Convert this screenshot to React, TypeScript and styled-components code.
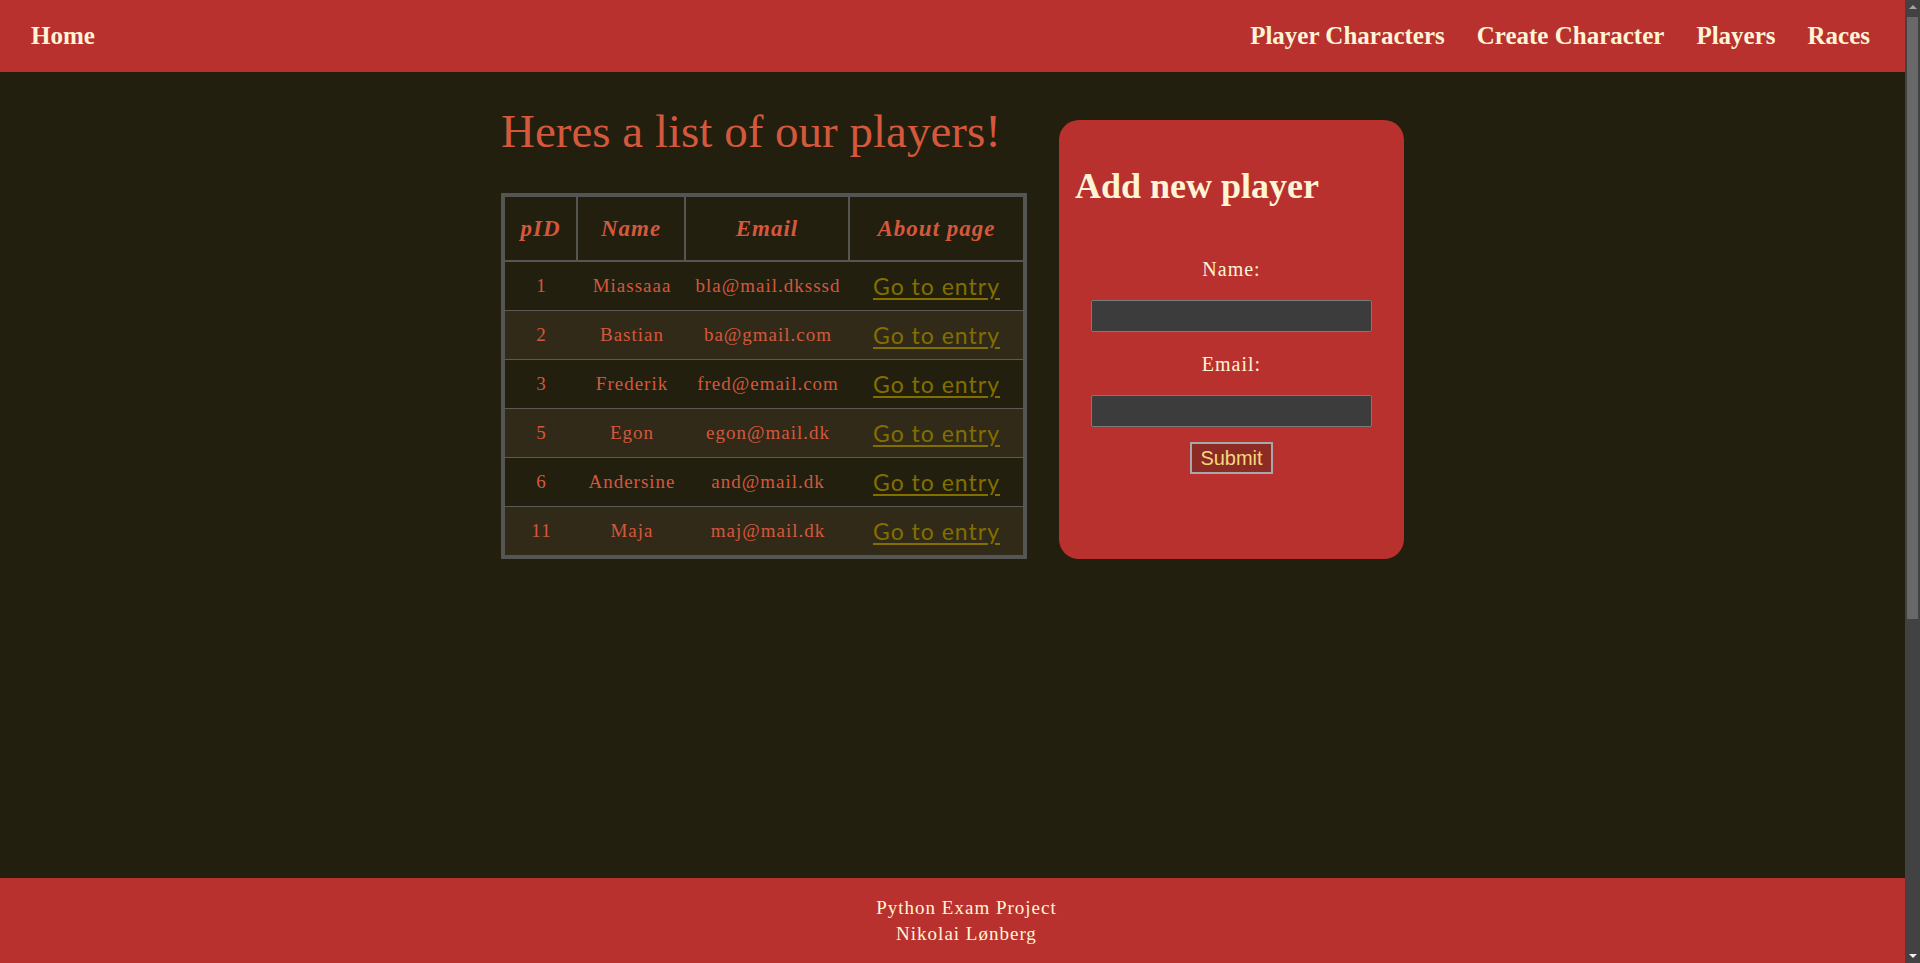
import React from "react";
import styled, { createGlobalStyle } from "styled-components";

// === THEME ===
const colors = {
  red: "#B8312F",
  dark: "#221F0F",
  rowAlt: "#312A19",
  cream: "#FFF4D6",
  coral: "#D4583C",
  olive: "#826F00",
  grid: "#555553",
  rowLine: "#5A5955",
  input: "#3C3C3C",
  submitBg: "#8C2A26",
  submitText: "#F6D87A",
};

const serif = `"Liberation Serif", "DejaVu Serif", serif`;
const SCROLLBAR = 15;

const GlobalStyle = createGlobalStyle`
  html, body {
    margin: 0;
    padding: 0;
    background: ${colors.dark};
    font-family: ${serif};
  }
`;

// === DATA ===
const navRight = ["Player Characters", "Create Character", "Players", "Races"];

const players = [
  { id: 1, name: "Miassaaa", email: "bla@mail.dksssd" },
  { id: 2, name: "Bastian", email: "ba@gmail.com" },
  { id: 3, name: "Frederik", email: "fred@email.com" },
  { id: 5, name: "Egon", email: "egon@mail.dk" },
  { id: 6, name: "Andersine", email: "and@mail.dk" },
  { id: 11, name: "Maja", email: "maj@mail.dk" },
];

const columns = [
  { label: "pID", width: 73 },
  { label: "Name", width: 108 },
  { label: "Email", width: 164 },
  { label: "About page", width: 173 },
];

// === LAYOUT ===
const Page = styled.div`
  margin-right: ${SCROLLBAR}px;
`;

const NavBar = styled.nav`
  height: 72px;
  box-sizing: border-box;
  padding: 0 35px 0 31px;
  background: ${colors.red};
  display: flex;
  align-items: center;
  justify-content: space-between;
`;

const NavGroup = styled.div`
  display: flex;
  align-items: center;
  gap: 32px;
`;

const NavLink = styled.a`
  font-family: ${serif};
  font-size: 25px;
  font-weight: 700;
  color: ${colors.cream};
  text-decoration: none;
  cursor: pointer;
`;

const Main = styled.main`
  display: flex;
  justify-content: center;
  align-items: stretch;
  gap: 32px;
  padding-top: 33px;
`;

const ListColumn = styled.div`
  display: flex;
  flex-direction: column;
  width: 526px;
`;

const Title = styled.h1`
  margin: 0 0 36px;
  font-size: 47px;
  font-weight: 400;
  line-height: 52px;
  color: ${colors.coral};
  white-space: nowrap;
`;

// === TABLE ===
const Table = styled.table`
  width: 526px;
  table-layout: fixed;
  border: 4px solid ${colors.grid};
  border-spacing: 0;
  color: ${colors.coral};

  tbody tr + tr td {
    border-top: 1px solid ${colors.rowLine};
  }
`;

const Col = styled.col<{ $w: number }>`
  width: ${(p) => p.$w}px;
`;

const HeadCell = styled.th`
  height: 63px;
  padding: 0;
  border-bottom: 2px solid ${colors.grid};
  border-right: 2px solid ${colors.grid};
  font-size: 23px;
  font-weight: 700;
  font-style: italic;
  letter-spacing: 1px;
  text-align: center;
  vertical-align: middle;

  &:last-child {
    border-right: none;
  }
`;

const Row = styled.tr<{ $alt: boolean }>`
  background: ${(p) => (p.$alt ? colors.rowAlt : "transparent")};
`;

const Cell = styled.td`
  height: 48px;
  padding: 0;
  font-size: 19px;
  letter-spacing: 1px;
  text-align: center;
  vertical-align: middle;
  white-space: nowrap;
`;

const EntryLink = styled.a`
  font-family: Lato, "Liberation Sans", sans-serif;
  font-size: 23px;
  color: ${colors.olive};
  text-decoration: underline;
  text-underline-offset: 3px;
  cursor: pointer;
`;

// === FORM CARD ===
const Card = styled.section`
  width: 345px;
  box-sizing: border-box;
  margin-top: 15px;
  padding: 16px;
  background: ${colors.red};
  border-radius: 20px;
`;

const CardTitle = styled.h2`
  margin: 30px 0 0;
  font-size: 36px;
  font-weight: 700;
  line-height: 41px;
  color: ${colors.cream};
`;

const Form = styled.form`
  display: flex;
  flex-direction: column;
  align-items: center;
  padding-top: 51px;
`;

const Label = styled.label<{ $first?: boolean }>`
  margin: ${(p) => (p.$first ? "0" : "21px")} 0 19px;
  font-size: 20px;
  line-height: 23px;
  letter-spacing: 1px;
  color: ${colors.cream};
`;

const Input = styled.input`
  width: 281px;
  height: 32px;
  box-sizing: border-box;
  background: ${colors.input};
  border: 1px solid #7a7a7a;
  border-radius: 2px;
  color: ${colors.cream};
  outline: none;
`;

const Submit = styled.button`
  margin-top: 15px;
  height: 32px;
  padding: 0 8px;
  background: ${colors.submitBg};
  border: 2px solid #A8A8A8;
  color: ${colors.submitText};
  font-family: "Liberation Sans", Arial, sans-serif;
  font-size: 20px;
  cursor: pointer;
`;

// === FOOTER ===
const Footer = styled.footer`
  position: fixed;
  left: 0;
  right: ${SCROLLBAR}px;
  bottom: 0;
  height: 85px;
  padding-left: 28px;
  box-sizing: border-box;
  background: ${colors.red};
  display: flex;
  flex-direction: column;
  align-items: center;
  justify-content: center;
  color: ${colors.cream};
  font-size: 19px;
  line-height: 26px;
  letter-spacing: 1px;
`;

// === BROWSER SCROLLBAR (page overflows in the original) ===
const ScrollTrack = styled.div`
  position: fixed;
  top: 0;
  right: 0;
  bottom: 0;
  width: ${SCROLLBAR}px;
  background: #424242;
`;

const ScrollThumb = styled.div`
  position: absolute;
  top: 17px;
  left: 2px;
  right: 2px;
  height: 602px;
  background: #686868;
`;

const ScrollArrow = styled.div<{ $down?: boolean }>`
  position: absolute;
  left: 4px;
  width: 0;
  height: 0;
  border-left: 4px solid transparent;
  border-right: 4px solid transparent;
  ${(p) =>
    p.$down
      ? `bottom: 5px; border-top: 4px solid #f0f0f0;`
      : `top: 5px; border-bottom: 4px solid #a3a3a3;`}
`;

export default function App() {
  return (
    <>
      <GlobalStyle />
      <Page>
        <NavBar>
          <NavLink>Home</NavLink>
          <NavGroup>
            {navRight.map((label) => (
              <NavLink key={label}>{label}</NavLink>
            ))}
          </NavGroup>
        </NavBar>

        <Main>
          <ListColumn>
            <Title>Heres a list of our players!</Title>
            <Table>
              <colgroup>
                {columns.map((c) => (
                  <Col key={c.label} $w={c.width} />
                ))}
              </colgroup>
              <thead>
                <tr>
                  {columns.map((c) => (
                    <HeadCell key={c.label}>{c.label}</HeadCell>
                  ))}
                </tr>
              </thead>
              <tbody>
                {players.map((p, i) => (
                  <Row key={p.id} $alt={i % 2 === 1}>
                    <Cell>{p.id}</Cell>
                    <Cell>{p.name}</Cell>
                    <Cell>{p.email}</Cell>
                    <Cell>
                      <EntryLink>Go to entry</EntryLink>
                    </Cell>
                  </Row>
                ))}
              </tbody>
            </Table>
          </ListColumn>

          <Card>
            <CardTitle>Add new player</CardTitle>
            <Form onSubmit={(e) => e.preventDefault()}>
              <Label $first htmlFor="name">Name:</Label>
              <Input id="name" type="text" />
              <Label htmlFor="email">Email:</Label>
              <Input id="email" type="text" />
              <Submit type="submit">Submit</Submit>
            </Form>
          </Card>
        </Main>
      </Page>

      <Footer>
        <div>Python Exam Project</div>
        <div>Nikolai Lønberg</div>
      </Footer>

      <ScrollTrack>
        <ScrollArrow />
        <ScrollThumb />
        <ScrollArrow $down />
      </ScrollTrack>
    </>
  );
}
